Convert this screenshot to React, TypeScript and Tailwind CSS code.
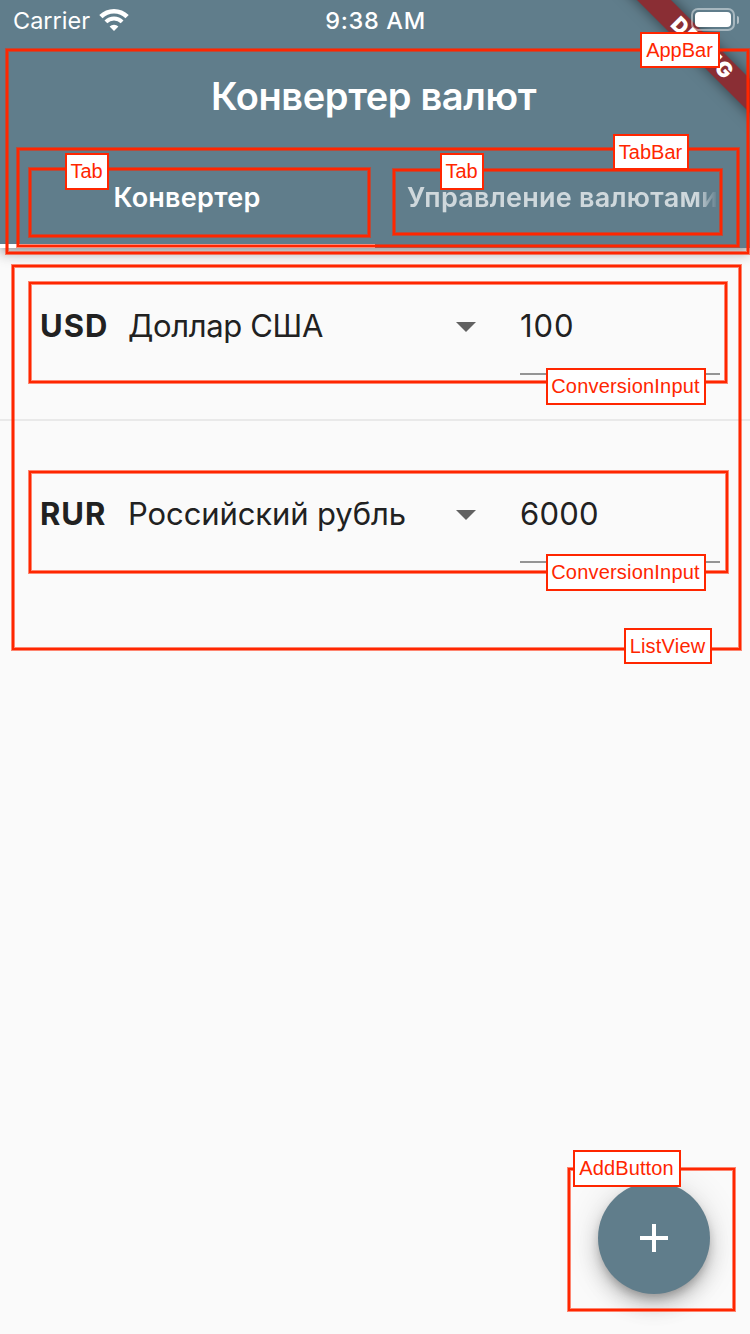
import React from "react";

function Wifi() {
  return (
    <svg className="ml-[9px] mt-[8px] h-[24px] w-[30px]" viewBox="0 0 30 24" fill="none">
      <path d="M1.9 8.6 A18.6 18.6 0 0 1 28.1 8.6" stroke="#fff" strokeWidth="4.6" />
      <path d="M6.9 13.9 A11.6 11.6 0 0 1 23.1 13.9" stroke="#fff" strokeWidth="4" />
      <path d="M15 23 L10.6 18.6 A6.4 6.4 0 0 1 19.4 18.6 Z" fill="#fff" />
    </svg>
  );
}

function Battery() {
  return (
    <div className="mt-[8px] flex h-[23px] items-center">
      <div className="h-[23px] w-[44px] rounded-[7px] border-2 border-white/45 p-[2px]">
        <div className="h-[15px] w-[36px] rounded-[4px] bg-white" />
      </div>
      <div className="ml-[2px] h-[8px] w-[2px] rounded-r-full bg-white/50" />
    </div>
  );
}

function DebugBanner() {
  return (
    <div className="absolute right-0 top-0 h-[160px] w-[160px] overflow-hidden">
      <div className="absolute left-[-8px] top-[36px] flex h-[24px] w-[240px] rotate-45 items-center justify-center bg-[#8a2e34] text-[21px] font-black leading-[24px] tracking-[1.1px] text-white shadow-[0_0_14px_rgba(0,0,0,0.5)]">
        <span className="mr-[-1px]">DEBUG</span>
      </div>
    </div>
  );
}

type RowProps = { code: string; name: string; nameClass: string; amount: string; amountClass: string };

function ConversionInput({ code, name, nameClass, amount, amountClass }: RowProps) {
  return (
    <div className="flex h-[92px] pl-[40px] pr-[30px] text-[31px] font-[370] leading-[86px] text-[#212121]">
      <div className="w-[88px] font-bold tracking-[1px]">{code}</div>
      <div className={nameClass}>{name}</div>
      <svg className="mt-[39px] h-[10px] w-[20px]" viewBox="0 0 20 10">
        <path d="M0 0H20L10 10Z" fill="#616161" />
      </svg>
      <div className={amountClass}>{amount}</div>
    </div>
  );
}

function Frame({ className }: { className: string }) {
  return (
    <div
      className={
        "absolute border-2 border-[#ff2600] shadow-[0_0_0_1px_rgba(255,38,0,0.55),inset_0_0_0_1px_rgba(255,38,0,0.55)] " +
        className
      }
    />
  );
}

function Label({ className, children }: { className: string; children: React.ReactNode }) {
  return (
    <div
      className={
        "absolute flex justify-center whitespace-nowrap border-2 border-[#ff2600] bg-white pr-px font-['Liberation_Sans',sans-serif] text-[20px] leading-[32px] text-[#ff2600] " +
        className
      }
    >
      {children}
    </div>
  );
}

export default function App() {
  return (
    <div className="relative flex h-[1334px] w-[750px] flex-col overflow-hidden bg-[#fafafa] font-['Inter',sans-serif]">
      <header className="relative h-[248px] bg-[#607d8b] text-white shadow-[0_4px_8px_-2px_rgba(0,0,0,0.2),0_8px_10px_rgba(0,0,0,0.14),0_2px_20px_rgba(0,0,0,0.12)]">
        <DebugBanner />
        <div className="relative grid h-[41px] grid-cols-[1fr_auto_1fr] text-[23.5px] leading-[41px]">
          <div className="flex pl-[13px]">
            <span>Carrier</span>
            <Wifi />
          </div>
          <div className="pl-px font-[550] tracking-[0.7px]">9:38 AM</div>
          <div className="flex justify-end pr-[11px]">
            <Battery />
          </div>
        </div>
        <h1 className="h-[111px] pr-[3px] text-center text-[38px] font-semibold leading-[110px] tracking-[-0.38px]">
          Конвертер валют
        </h1>
        <div className="flex h-[96px] text-[27px] font-semibold leading-[92px]">
          <div className="w-[375px] border-b-4 border-white pr-px text-center tracking-[0.25px]">Конвертер</div>
          <div className="w-[375px] px-8">
            <div className="overflow-hidden whitespace-nowrap tracking-[0.25px] text-white/70 [mask-image:linear-gradient(to_right,black_290px,transparent)]">
              Управление валютами
            </div>
          </div>
        </div>
      </header>

      <main className="pt-[35px]">
        <ConversionInput
          code="USD"
          name="Доллар США"
          nameClass="w-[328px] tracking-[-0.35px]"
          amount="100"
          amountClass="ml-[44px] w-[200px] border-b-2 border-[#949494] tracking-[0.9px]"
        />
        <div className="mb-[50px] mt-[44px] h-[2px] bg-[#e9e9e9]" />
        <ConversionInput
          code="RUR"
          name="Российский рубль"
          nameClass="w-[328px] tracking-[-0.1px]"
          amount="6000"
          amountClass="ml-[44px] w-[200px] border-b-2 border-[#949494] tracking-[0.25px]"
        />
      </main>

      <button className="mb-[40px] ml-auto mr-[40px] mt-auto flex h-[112px] w-[112px] items-center justify-center rounded-full bg-[#607d8b] shadow-[0_6px_10px_-2px_rgba(0,0,0,0.24),0_12px_20px_rgba(0,0,0,0.18),0_2px_36px_rgba(0,0,0,0.12)]">
        <svg className="h-[28px] w-[28px]" viewBox="0 0 28 28">
          <path d="M14 0V28M0 14H28" stroke="#fff" strokeWidth="4" />
        </svg>
      </button>

      <Frame className="left-[6px] top-[49px] h-[205px] w-[743px]" />
      <Frame className="left-[17px] top-[148px] h-[99px] w-[722px]" />
      <Frame className="left-[29px] top-[168px] h-[69px] w-[341px]" />
      <Frame className="left-[393px] top-[169px] h-[66px] w-[329px]" />
      <Frame className="left-[12px] top-[265px] h-[385px] w-[729px]" />
      <Frame className="left-[29px] top-[282px] h-[101px] w-[698px]" />
      <Frame className="left-[29px] top-[471px] h-[102px] w-[699px]" />
      <Frame className="left-[568px] top-[1168px] h-[143px] w-[167px]" />

      <Label className="left-[640px] top-[32px] h-[36px] w-[80px]">AppBar</Label>
      <Label className="left-[613px] top-[134px] h-[36px] w-[76px]">TabBar</Label>
      <Label className="left-[65px] top-[153px] h-[37px] w-[44px]">Tab</Label>
      <Label className="left-[440px] top-[153px] h-[37px] w-[44px]">Tab</Label>
      <Label className="left-[546px] top-[368px] h-[37px] w-[160px] tracking-[0.2px]">ConversionInput</Label>
      <Label className="left-[546px] top-[554px] h-[37px] w-[160px] tracking-[0.2px]">ConversionInput</Label>
      <Label className="left-[624px] top-[628px] h-[36px] w-[88px] tracking-[0.2px]">ListView</Label>
      <Label className="left-[573px] top-[1150px] h-[37px] w-[108px] tracking-[0.1px]">AddButton</Label>
    </div>
  );
}
